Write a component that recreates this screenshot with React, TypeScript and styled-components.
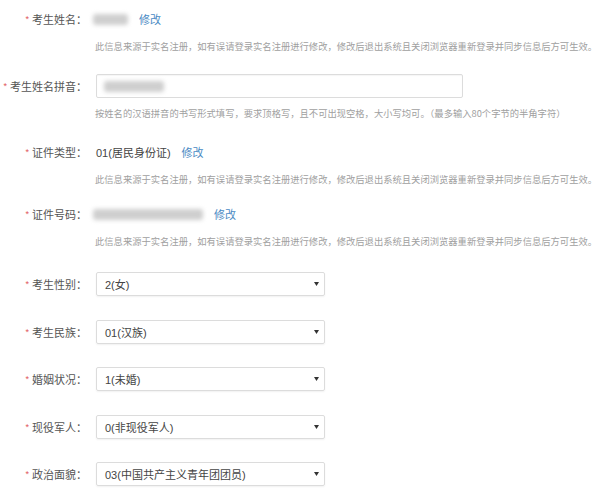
import React from "react";
import styled, { createGlobalStyle } from "styled-components";

const Global = createGlobalStyle`
  body {
    margin: 0;
    background: #fff;
    font-family: "Noto Sans CJK SC", "Noto Sans", sans-serif;
  }
`;

const Form = styled.div`
  width: 600px;
  height: 496px;
  padding-top: 7px;
  box-sizing: border-box;
  overflow: hidden;
`;

const Group = styled.div<{ $gap: number }>`
  margin-bottom: ${(p) => p.$gap}px;
`;

const Row = styled.div`
  display: flex;
  align-items: center;
  height: 24px;
`;

const Label = styled.div`
  width: 87px;
  flex-shrink: 0;
  margin-right: 9px;
  display: flex;
  justify-content: flex-end;
  align-items: center;
  font-size: 11px;
  color: #555;
  white-space: nowrap;
`;

const Star = styled.span`
  color: #e0545a;
  font-size: 9px;
  margin-right: 3px;
  font-family: "Liberation Sans", sans-serif;
`;

const Value = styled.span`
  font-size: 11px;
  color: #444;
  font-family: "Liberation Sans", "Noto Sans CJK SC", sans-serif;
`;

const Blur = styled.div<{ $w: number }>`
  width: ${(p) => p.$w}px;
  height: 11px;
  margin-left: -3px;
  background: #cfcfcf;
  border-radius: 3px;
  filter: blur(2px);
`;

const Link = styled.a`
  font-size: 11px;
  color: #4a8ac4;
  margin-left: 11px;
  text-decoration: none;
  cursor: pointer;
`;

const Help = styled.div`
  margin-top: 8px;
  padding-left: 95px;
  font-size: 9.3px;
  line-height: 14px;
  color: #a0a0a0;
  white-space: nowrap;
`;

const TextBox = styled.div`
  width: 367px;
  height: 24px;
  box-sizing: border-box;
  border: 1px solid #dcdcdc;
  border-radius: 2px;
  box-shadow: inset 0 1px 1px rgba(0, 0, 0, 0.04);
  display: flex;
  align-items: center;
  padding-left: 10px;
`;

const Select = styled.div`
  width: 229px;
  height: 24px;
  box-sizing: border-box;
  border: 1px solid #dcdcdc;
  border-radius: 2px;
  box-shadow: 0 1px 2px rgba(0, 0, 0, 0.06);
  display: flex;
  align-items: center;
  justify-content: space-between;
  padding: 0 5px 0 8px;
  font-size: 11px;
  color: #444;
  font-family: "Liberation Sans", "Noto Sans CJK SC", sans-serif;
`;

const Caret = () => (
  <svg width="5" height="4" viewBox="0 0 5 4">
    <path d="M0 0h5L2.5 4z" fill="#333" />
  </svg>
);

const notice =
  "此信息来源于实名注册，如有误请登录实名注册进行修改，修改后退出系统且关闭浏览器重新登录并同步信息后方可生效。";

const selects = [
  ["考生性别：", "2(女)"],
  ["考生民族：", "01(汉族)"],
  ["婚姻状况：", "1(未婚)"],
  ["现役军人：", "0(非现役军人)"],
  ["政治面貌：", "03(中国共产主义青年团团员)"],
];

const Field = ({ label }: { label: string }) => (
  <Label>
    <Star>*</Star>
    {label}
  </Label>
);

export default function App() {
  return (
    <Form>
      <Global />
      <Group $gap={21}>
        <Row>
          <Field label="考生姓名：" />
          <Blur $w={35} />
          <Link>修改</Link>
        </Row>
        <Help>{notice}</Help>
      </Group>
      <Group $gap={20}>
        <Row>
          <Field label="考生姓名拼音：" />
          <TextBox>
            <Blur $w={60} />
          </TextBox>
        </Row>
        <Help>按姓名的汉语拼音的书写形式填写，要求顶格写，且不可出现空格，大小写均可。（最多输入80个字节的半角字符）</Help>
      </Group>
      <Group $gap={16}>
        <Row>
          <Field label="证件类型：" />
          <Value>01(居民身份证)</Value>
          <Link>修改</Link>
        </Row>
        <Help>{notice}</Help>
      </Group>
      <Group $gap={24}>
        <Row>
          <Field label="证件号码：" />
          <Blur $w={110} />
          <Link>修改</Link>
        </Row>
        <Help>{notice}</Help>
      </Group>
      {selects.map(([label, value]) => (
        <Group $gap={23.5} key={label}>
          <Row>
            <Field label={label} />
            <Select>
              {value}
              <Caret />
            </Select>
          </Row>
        </Group>
      ))}
    </Form>
  );
}
